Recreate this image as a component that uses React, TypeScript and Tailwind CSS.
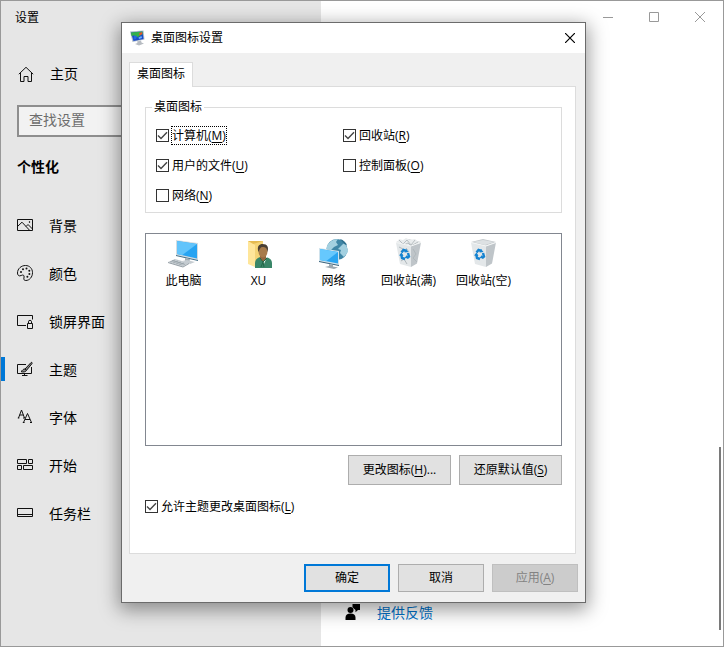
import React from 'react';

type IconProps = { children: React.ReactNode };

function NavIcon({ children }: IconProps) {
  return (
    <svg viewBox="0 0 16 16" className="size-4 shrink-0" fill="none" stroke="#111" strokeWidth="1" aria-hidden="true">
      {children}
    </svg>
  );
}

const navItems = [
  {
    label: '背景',
    icon: (
      <NavIcon>
        <path d="M.5 2.500h15v11H.5z" />
        <path d="M.5 9.500 5 5.200l7.500 8M9 9.500l2-2 4.500 4.500" />
        <circle cx="12.500" cy="5" r=".4" fill="#111" />
      </NavIcon>
    ),
  },
  {
    label: '颜色',
    icon: (
      <NavIcon>
        <path d="M8.500.5c4 0 7 3 7 7.200 0 4.300-3 7.800-6.700 7.800-1.600 0-2.300-1-1.900-2.400.4-1.500.3-3.100-1.200-3.100-1.300 0-1.700 1-3 .9C1.300 10.800.5 9.700.5 8 .5 3.700 4.200.5 8.500.5Z" />
        <g fill="#111" stroke="none">
          <circle cx="4" cy="7" r="1" />
          <circle cx="6" cy="4.200" r="1" />
          <circle cx="9.500" cy="3.500" r="1" />
          <circle cx="12.300" cy="5.800" r="1" />
          <circle cx="12.400" cy="9" r="1" />
          <circle cx="10.400" cy="11.800" r="1" />
        </g>
      </NavIcon>
    ),
  },
  {
    label: '锁屏界面',
    icon: (
      <NavIcon>
        <path d="M9 12.500H.5v-10h15v4M10.500 10.500h5v5h-5zM11.500 10.500V8.800a1.500 1.500 0 0 1 3 0v1.700" />
      </NavIcon>
    ),
  },
  {
    label: '主题',
    selected: true,
    icon: (
      <NavIcon>
        <path d="M9 3.500H.5v9h14V6M7.500 12.500v2M5 14.500h5.500" />
        <path d="M8 8 14 1.600c.8-.6 1.600.2 1 1L9.500 9.300M8 8c-2-.2-2.300 1.500-4 2.600 2 .8 5 .4 5.500-1.300Z" fill="#8a8a8a" />
      </NavIcon>
    ),
  },
  {
    label: '字体',
    icon: (
      <NavIcon>
        <path d="m1.500 9 3-8 3 8M2.700 6h3.700M.8 9h1.500M6 9h1.800M6.500 13.500l4-9 4 9M8 10.500h5M5.800 13.500h1.800M13 13.500h2" />
      </NavIcon>
    ),
  },
  {
    label: '开始',
    icon: (
      <NavIcon>
        <path d="M.5 2.500h9v4h-9zM11.500 2.500h4v4h-4zM.5 8.500h4v4h-4zM6.500 8.500h9v4h-9z" />
      </NavIcon>
    ),
  },
  {
    label: '任务栏',
    icon: (
      <NavIcon>
        <path d="M.5 3.500h15v8H.5zM.5 9.500h15" />
      </NavIcon>
    ),
  },
];

function Hotkey({ text, k, tail = '' }: { text: string; k: string; tail?: string }) {
  return (
    <span className="whitespace-nowrap">
      {text}(<span className="underline underline-offset-2">{k}</span>){tail}
    </span>
  );
}

function Check({ text, k, checked, focused }: { text: string; k: string; checked?: boolean; focused?: boolean }) {
  return (
    <label className="flex h-[18px] items-center">
      <span className="grid size-[13px] shrink-0">
        <input
          type="checkbox"
          defaultChecked={checked}
          className="peer col-start-1 row-start-1 size-[13px] appearance-none border border-[#333] bg-white"
        />
        <svg
          viewBox="0 0 13 13"
          className="pointer-events-none invisible col-start-1 row-start-1 size-[13px] peer-checked:visible"
          fill="none"
          stroke="#444"
          strokeWidth="1.4"
          aria-hidden="true"
        >
          <path d="m2 6.500 3 3 6-6.200" />
        </svg>
      </span>
      <span
        className={
          focused
            ? 'ml-0.5 flex h-[19px] items-center border border-dotted border-black pt-0.5'
            : 'ml-0.5 flex h-[19px] items-center border border-transparent pt-0.5'
        }
      >
        <Hotkey text={text} k={k} />
      </span>
    </label>
  );
}

function ComputerIcon() {
  return (
    <svg viewBox="0 0 32 32" className="size-8" aria-hidden="true">
      <path d="M8 2 30 5v17L8 17Z" fill="#d5dce0" />
      <path d="M9 3 29 6v14.500L9 16Z" fill="#27a4f2" />
      <path d="M9 3 29 6 14 17.200 9 16Z" fill="#62c4fb" />
      <path d="m8 17 22 5v1L8 18Z" fill="#3d6b85" />
      <path d="m17 20 5 1-1 4-4-1Z" fill="#a2adb5" />
      <path d="m14 23 5-1 8 2-5 2Z" fill="#c5ccd1" />
      <path d="m0 24 7-3 14 4-6 3.500Z" fill="#c4cbd0" />
      <path d="m2 24 5-2M5 25l5-2M8 26l5-2M11 27l5-2M4 22.500l13 4" stroke="#8d989f" strokeWidth=".6" />
      <path d="m0 24 15 4.500 6-3.500v1l-6 3.500L0 25Z" fill="#929ca3" />
    </svg>
  );
}

function UserIcon() {
  return (
    <svg viewBox="0 0 32 32" className="size-8" aria-hidden="true">
      <path d="M5 3h15v22l-15 1Z" fill="#e5bb50" />
      <path d="m10 6 10-3v21l-10 3Z" fill="#f4d477" />
      <path d="m5 3 7 4v22l-7-3Z" fill="#ffe69a" />
      <path d="M12 30v-5c0-3 2-5 5-6h6c4 1 6 3 6 6v5Z" fill="#398668" />
      <path d="m17 19 4 7 3-7Z" fill="#e9f1ec" />
      <path d="M17 17h6v4l-3 3-3-3Z" fill="#946840" />
      <ellipse cx="20" cy="13.500" rx="4.500" ry="6" fill="#a77b4b" />
      <path d="M15.500 14c-2-6 1-8 4-8 5 0 6.500 3 5 8-.5-4-2-5-5-5-2 0-3 2-4 5Z" fill="#493f34" />
      <path d="m17 20 3 4-2 5M24 20l-4 4 1 5" stroke="#216647" fill="none" />
    </svg>
  );
}

function NetworkIcon() {
  return (
    <svg viewBox="0 0 32 32" className="size-8" aria-hidden="true">
      <circle cx="19" cy="11.500" r="10.500" fill="#3f86a6" />
      <path d="M9 8c2-4 6-7 11-7l-2 3 2 3-4 2-3 3-5-1ZM22 9l4-4c3 3 4 6 4 9l-4 5-4-4 1-3-3-1Z" fill="#a3d0e0" />
      <path d="M22 1c4 1 6 4 7 6l-3-1Z" fill="#2e718f" />
      <path d="m1 10 20 3v14L1 23Z" fill="#cfe2ec" />
      <path d="m2 11 18 3v11.500L2 22Z" fill="#29a5f1" />
      <path d="m2 11 18 3L8 23.300 2 22Z" fill="#66c8fd" />
      <path d="m1 23 20 4v1L1 24Z" fill="#36607a" />
      <path d="m11 26 4 1v1.500l5 1-4 1.500-9-2 4-1Z" fill="#9ca8b0" />
    </svg>
  );
}

function BinIcon({ full }: { full?: boolean }) {
  return (
    <svg viewBox="0 0 32 32" className="size-8" aria-hidden="true">
      <path d="m3 4 12-3 13 3-11 4Z" fill="#c3c8cb" />
      <path d="m5 4 10-2 11 2-9 3Z" fill="#dde1e3" />
      {full && (
        <g>
          <path d="m4 5 2-4 4 1 3-2 4 2 5-1 5 4-9 4-7-1Z" fill="#e9eced" />
          <path d="m6 2 4 4 4-4 4 5 4-5M5 6l6 1 4-2 3 3 7-4" stroke="#a9b1b5" strokeWidth=".8" fill="none" />
        </g>
      )}
      <path d="m3 4.500 15 3.500v21L7 26Z" fill="#e3e7e9" />
      <path d="m18 8 10-3.500-4 21-6 3.500Z" fill="#bfc5c9" />
      <path d="m3 4.500 15 3.500 10-3.500" stroke="#f4f6f6" fill="none" />
      {full && <path d="m6 9 4 2-2 3M20 11l3 5-3 4 4 4M13 10l3 4M8 23l3-2 3 5" stroke="#b0b8bc" fill="none" />}
      <g fill="none" stroke="#1583d1" strokeWidth="2.400">
        <path d="m8.500 14.500 2-2.500 3 1" />
        <path d="m15 15 1 3.500-2 1.500" />
        <path d="m12 21-3-1-.8-3.500" />
      </g>
      <path d="m13 11 2.500 3-4 .5ZM15.500 20.500l-4-.5 2.500-3ZM6 17.500l2.500-3 2 3.500Z" fill="#1583d1" />
    </svg>
  );
}

const desktopItems = [
  { name: '此电脑', icon: <ComputerIcon /> },
  { name: 'XU', icon: <UserIcon /> },
  { name: '网络', icon: <NetworkIcon /> },
  { name: '回收站(满)', icon: <BinIcon full /> },
  { name: '回收站(空)', icon: <BinIcon /> },
];

function Sidebar() {
  return (
    <aside className="flex w-80 shrink-0 flex-col bg-[#e6e6e6]">
      <h1 className="h-8 pl-3.5 text-xs leading-[34px]">设置</h1>
      <a href="#home" className="mt-[17px] flex h-12 items-center gap-4 pl-[17px]">
        <svg viewBox="0 0 16 16" className="size-4" fill="none" stroke="#111" aria-hidden="true">
          <path d="M.8 8.200 8 1.300l7.200 6.900M2.500 7v8.500h3.500v-5h4v5h3.500V7" />
        </svg>
        主页
      </a>
      <input
        type="text"
        placeholder="查找设置"
        aria-label="查找设置"
        className="mx-4 mt-[7px] h-8 border-2 border-[#8e8e8e] bg-[#f2f2f2] px-2.5 pb-1 placeholder:text-[#6d6d6d]"
      />
      <h2 className="mt-5 pl-4 leading-5 font-bold">个性化</h2>
      <nav className="mt-6 flex flex-col">
        {navItems.map((item) => (
          <a key={item.label} href="#section" className="flex h-12 items-center">
            <span className={item.selected ? 'h-6 w-1 bg-[#0078d7]' : 'h-6 w-1'} />
            <span className="flex items-center gap-4 pl-3">
              {item.icon}
              <span className="pt-0.5">{item.label}</span>
            </span>
          </a>
        ))}
      </nav>
    </aside>
  );
}

function MainArea() {
  return (
    <main className="flex flex-1 flex-col bg-white">
      <div className="flex justify-end">
        <button aria-label="最小化" className="grid h-8 w-[46px] place-items-center">
          <svg viewBox="0 0 10 10" className="size-2.5" stroke="#999" aria-hidden="true">
            <path d="M0 5.500h10" />
          </svg>
        </button>
        <button aria-label="最大化" className="grid h-8 w-[46px] place-items-center">
          <svg viewBox="0 0 10 10" className="size-2.5" stroke="#999" fill="none" aria-hidden="true">
            <path d="M.5.5h9v9h-9z" />
          </svg>
        </button>
        <button aria-label="关闭" className="grid h-8 w-[46px] place-items-center">
          <svg viewBox="0 0 10 10" className="size-2.5" stroke="#999" aria-hidden="true">
            <path d="m0 0 10 10M10 0 0 10" />
          </svg>
        </button>
      </div>
      <div className="flex flex-1 items-end justify-between pr-0.5 pb-4">
        <a href="#feedback" className="flex h-9 items-center gap-4 pl-6 text-[#0071c8]">
          <svg viewBox="0 0 16 16" className="size-4" fill="#000" aria-hidden="true">
            <circle cx="5.500" cy="6" r="3" />
            <path d="M.5 16v-2.500c0-2.500 2-4 5-4s5 1.500 5 4V16ZM7.500 0H15v6h-2l-2.500 2.300V6L8.800 4.500 7.500 3Z" />
          </svg>
          <span className="pt-0.5">提供反馈</span>
        </a>
        <div className="h-[183px] w-0.5 bg-[#7a7a7a]" />
      </div>
    </main>
  );
}

function Dialog() {
  return (
    <section
      role="dialog"
      aria-label="桌面图标设置"
      className="absolute top-[21px] left-[120px] flex w-[465px] flex-col border border-[#6b6b6b] bg-[#f0f0f0] text-xs leading-4 shadow-[0_5px_18px_2px_rgba(0,0,0,0.4)]"
    >
      <header className="flex h-[30px] items-center bg-white pl-2">
        <svg viewBox="0 0 16 16" className="size-4" aria-hidden="true">
          <path d="m0 1.500 13.500-1 1 9L2.500 12Z" fill="#aebccb" />
          <path d="m1 2.500 11.500-1 1 7.500L3.500 11Z" fill="#1b49c9" />
          <path d="m1 2.500 11.500-1 .3 2.500L7 7.500 4 5.500 1.500 6Z" fill="#35b04a" />
          <path d="M9 3.500 12 2l.3 2-2.800 1.500Z" fill="#ee4a30" />
          <path d="m4 5.500 3 .5L6 9l-2.500.5Z" fill="#2468e0" />
          <path d="m8.500 7.500 3-1.500.5 2-3 1Z" fill="#6fb2f6" />
          <path d="m7 11.500 4-1 .5 2 2.500 1-5 2-4-1.500 2.500-1Z" fill="#b7bcc2" />
        </svg>
        <h2 className="ml-1 flex-1 pl-px">桌面图标设置</h2>
        <button aria-label="关闭对话框" className="grid size-[30px] place-items-center">
          <svg viewBox="0 0 10 10" className="size-2.5" stroke="#000" strokeWidth="1.200" aria-hidden="true">
            <path d="m0 0 10 10M10 0 0 10" />
          </svg>
        </button>
      </header>

      <div className="mt-[9px] mr-[9px] ml-[7px]">
        <div role="tablist" className="flex">
          <button
            role="tab"
            aria-selected="true"
            className="relative -mb-px h-[25px] w-16 border border-b-0 border-[#dcdcdc] bg-white pb-0.5"
          >
            桌面图标
          </button>
        </div>
        <div role="tabpanel" className="border border-[#dcdcdc] bg-white pt-3 pr-[13px] pb-[38px] pl-[15px]">
          <fieldset className="border border-[#dcdcdc] px-2.5 pb-2">
            <legend className="-ml-1 px-0.5">桌面图标</legend>
            <div className="mt-[11px] grid grid-cols-[187px_1fr] gap-y-3">
              <Check text="计算机" k="M" checked focused />
              <Check text="回收站" k="R" checked />
              <Check text="用户的文件" k="U" checked />
              <Check text="控制面板" k="O" />
              <Check text="网络" k="N" />
            </div>
          </fieldset>

          <ul className="mt-5 flex h-[213px] border border-[#828790]">
            {desktopItems.map((item) => (
              <li key={item.name} className="flex w-[75px] flex-col items-center gap-[3px] pt-1 whitespace-nowrap">
                {item.icon}
                {item.name}
              </li>
            ))}
          </ul>

          <div className="mt-[9px] flex justify-end gap-2">
            <button className="h-[30px] w-[103px] border border-[#adadad] bg-[#e1e1e1]">
              <Hotkey text="更改图标" k="H" tail="..." />
            </button>
            <button className="h-[30px] w-[103px] border border-[#adadad] bg-[#e1e1e1]">
              <Hotkey text="还原默认值" k="S" />
            </button>
          </div>
          <div className="mt-3">
            <Check text="允许主题更改桌面图标" k="L" checked />
          </div>
        </div>
      </div>

      <footer className="flex justify-end gap-2 py-2.5 pr-[7px]">
        <button className="h-7 w-[86px] border-2 border-[#0078d7] bg-[#e1e1e1]">确定</button>
        <button className="h-7 w-[86px] border border-[#adadad] bg-[#e1e1e1]">取消</button>
        <button disabled className="h-7 w-[86px] border border-[#bfbfbf] bg-[#cccccc] text-[#838383]">
          <Hotkey text="应用" k="A" />
        </button>
      </footer>
    </section>
  );
}

export default function App() {
  return (
    <div className="relative flex min-h-screen border border-[#999] bg-white font-['Open_Sans','Noto_Sans_CJK_SC',sans-serif] text-sm text-black">
      <Sidebar />
      <MainArea />
      <Dialog />
    </div>
  );
}
